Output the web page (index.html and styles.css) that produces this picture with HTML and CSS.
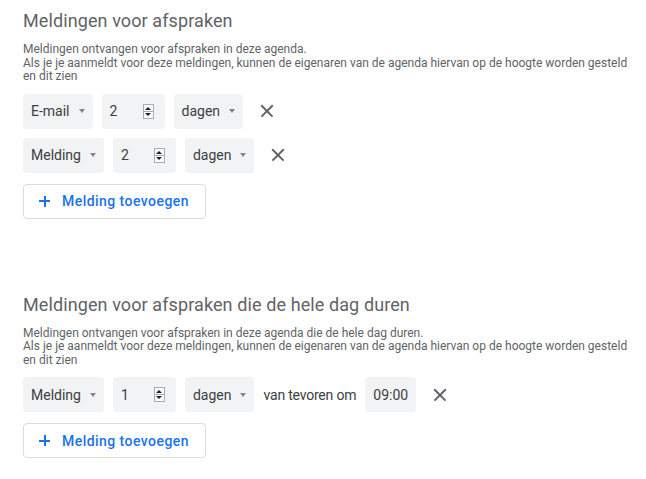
FILE: index.html
```html
<!DOCTYPE html>
<html lang="nl">
<head>
  <meta charset="UTF-8" />
  <meta name="viewport" content="width=device-width, initial-scale=1.0"/>
  <title>Meldingen</title>
  <link rel="stylesheet" href="styles.css">
</head>
<body>
  <section class="meldingen">
    <h2>Meldingen voor afspraken</h2>
    <p class="uitleg">Meldingen ontvangen voor afspraken in deze agenda.<br>
      Als je je aanmeldt voor deze meldingen, kunnen de eigenaren van de agenda hiervan op de hoogte worden gesteld<br>
      en dit zien</p>

    <div class="rij">
      <div class="keuze">E-mail <span class="pijl"></span></div>
      <div class="getal">2 <span class="spin"></span></div>
      <div class="keuze">dagen <span class="pijl"></span></div>
      <button class="wis" title="Verwijderen"></button>
    </div>
    <div class="rij">
      <div class="keuze">Melding <span class="pijl"></span></div>
      <div class="getal">2 <span class="spin"></span></div>
      <div class="keuze">dagen <span class="pijl"></span></div>
      <button class="wis" title="Verwijderen"></button>
    </div>

    <button class="toevoegen"><span class="plus"></span>Melding toevoegen</button>
  </section>

  <section class="meldingen">
    <h2>Meldingen voor afspraken die de hele dag duren</h2>
    <p class="uitleg">Meldingen ontvangen voor afspraken in deze agenda die de hele dag duren.<br>
      Als je je aanmeldt voor deze meldingen, kunnen de eigenaren van de agenda hiervan op de hoogte worden gesteld<br>
      en dit zien</p>

    <div class="rij">
      <div class="keuze">Melding <span class="pijl"></span></div>
      <div class="getal">1 <span class="spin"></span></div>
      <div class="keuze">dagen <span class="pijl"></span></div>
      <span class="tekst">van tevoren om</span>
      <div class="tijd">09:00</div>
      <button class="wis" title="Verwijderen"></button>
    </div>

    <button class="toevoegen"><span class="plus"></span>Melding toevoegen</button>
  </section>
</body>
</html>
```

FILE: styles.css
```css
:root {
  --grijs-tekst: #5f6368;
  --donker: #3c4043;
  --veld: #f1f3f4;
  --rand: #dadce0;
  --blauw: #1a73e8;
}

* {
  box-sizing: border-box;
  margin: 0;
  padding: 0;
}

body {
  font-family: Roboto, "Liberation Sans", Arial, sans-serif;
  background: #ffffff;
  padding: 9px 0 0 23px;
}

.meldingen {
  margin-bottom: 74px;
}

.meldingen:last-child {
  margin-bottom: 0;
}

h2 {
  font-size: 18px;
  font-weight: 400;
  line-height: 24px;
  letter-spacing: 0.1px;
  color: var(--grijs-tekst);
}

.uitleg {
  margin-top: 10px;
  font-size: 12px;
  line-height: 13.5px;
  color: var(--grijs-tekst);
}

.rij {
  display: flex;
  align-items: center;
  gap: 9px;
  margin-top: 9px;
  height: 35px;
  font-size: 14px;
  color: var(--donker);
}

.uitleg + .rij {
  margin-top: 10px;
}

.keuze, .getal, .tijd {
  height: 35px;
  display: flex;
  align-items: center;
  background: var(--veld);
  border-radius: 4px;
  padding: 0 8px;
}

.keuze {
  gap: 9px;
}

.pijl {
  width: 0;
  height: 0;
  border-left: 3.5px solid transparent;
  border-right: 3.5px solid transparent;
  border-top: 4px solid #80868b;
}

.getal {
  width: 63px;
  justify-content: space-between;
  padding-right: 11px;
}

/* kleine op/neer-knopjes van het getalveld */
.spin {
  position: relative;
  width: 11px;
  height: 15px;
  border: 1px solid #a9adb1;
  background-color: #fafafa;
  background-image: linear-gradient(#a9adb1, #a9adb1);
  background-size: 100% 1px;
  background-position: 0 50%;
  background-repeat: no-repeat;
}

.spin::before, .spin::after {
  content: "";
  position: absolute;
  left: 1.5px;
  border-left: 3px solid transparent;
  border-right: 3px solid transparent;
}

.spin::before {
  top: 2px;
  border-bottom: 3px solid #202124;
}

.spin::after {
  bottom: 2px;
  border-top: 3px solid #202124;
}

.tijd {
  width: 51px;
}

.tekst {
  white-space: nowrap;
  letter-spacing: -0.2px;
}

.wis {
  position: relative;
  width: 13px;
  height: 13px;
  margin-left: 8px;
  border: none;
  background: none;
  cursor: pointer;
}

.wis::before, .wis::after {
  content: "";
  position: absolute;
  left: -1.5px;
  top: 5.7px;
  width: 16px;
  height: 1.6px;
  background: var(--grijs-tekst);
  transform: rotate(45deg);
}

.wis::after {
  transform: rotate(-45deg);
}

.toevoegen {
  display: flex;
  align-items: center;
  gap: 12px;
  margin-top: 11px;
  height: 35px;
  width: 183px;
  padding: 0 15px;
  border: 1px solid var(--rand);
  border-radius: 4px;
  background: #ffffff;
  font-family: Roboto, "Liberation Sans", Arial, sans-serif;
  font-size: 14px;
  font-weight: 500;
  letter-spacing: 0.45px;
  color: var(--blauw);
  cursor: pointer;
}

.plus {
  position: relative;
  width: 11px;
  height: 11px;
}

.plus::before, .plus::after {
  content: "";
  position: absolute;
  background: var(--blauw);
}

.plus::before {
  left: 0;
  top: 4.5px;
  width: 11px;
  height: 2px;
}

.plus::after {
  left: 4.5px;
  top: 0;
  width: 2px;
  height: 11px;
}
```
